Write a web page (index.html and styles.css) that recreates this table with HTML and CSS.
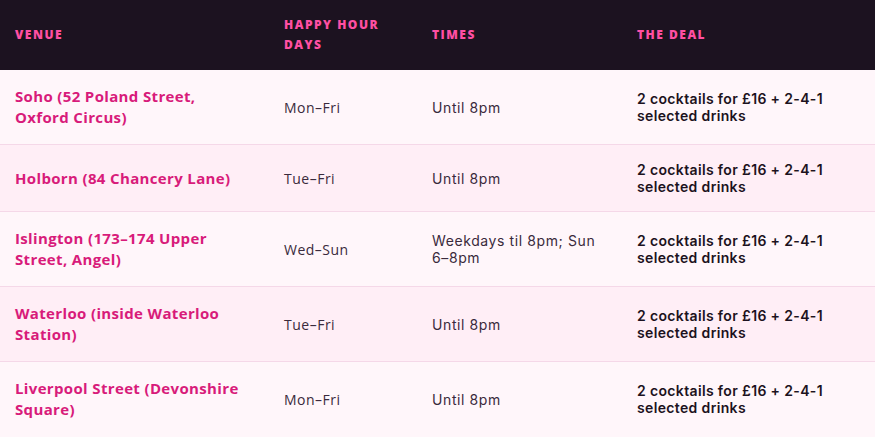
FILE: index.html
```html
<!DOCTYPE html>
<html lang="en">
<head>
<meta charset="utf-8">
<title>Happy Hour</title>
<link rel="stylesheet" href="styles.css">
</head>
<body>
<table class="hh">
  <colgroup>
    <col class="c-venue">
    <col class="c-days">
    <col class="c-times">
    <col class="c-deal">
  </colgroup>
  <thead>
    <tr>
      <th>Venue</th>
      <th>Happy Hour Days</th>
      <th>Times</th>
      <th>The Deal</th>
    </tr>
  </thead>
  <tbody>
    <tr>
      <td class="venue">Soho (52 Poland Street, Oxford Circus)</td>
      <td class="days">Mon–Fri</td>
      <td class="times">Until 8pm</td>
      <td class="deal">2 cocktails for £16 + 2-4-1 selected drinks</td>
    </tr>
    <tr>
      <td class="venue">Holborn (84 Chancery Lane)</td>
      <td class="days">Tue–Fri</td>
      <td class="times">Until 8pm</td>
      <td class="deal">2 cocktails for £16 + 2-4-1 selected drinks</td>
    </tr>
    <tr>
      <td class="venue">Islington (173–174 Upper Street, Angel)</td>
      <td class="days">Wed–Sun</td>
      <td class="times">Weekdays til 8pm; Sun 6–8pm</td>
      <td class="deal">2 cocktails for £16 + 2-4-1 selected drinks</td>
    </tr>
    <tr>
      <td class="venue">Waterloo (inside Waterloo Station)</td>
      <td class="days">Tue–Fri</td>
      <td class="times">Until 8pm</td>
      <td class="deal">2 cocktails for £16 + 2-4-1 selected drinks</td>
    </tr>
    <tr>
      <td class="venue">Liverpool Street (Devonshire Square)</td>
      <td class="days">Mon–Fri</td>
      <td class="times">Until 8pm</td>
      <td class="deal">2 cocktails for £16 + 2-4-1 selected drinks</td>
    </tr>
  </tbody>
</table>
</body>
</html>
```

FILE: styles.css
```css
html, body {
  margin: 0;
  padding: 0;
  background: #fff6fa;
}

.hh {
  width: 875px;
  border-collapse: collapse;
  table-layout: fixed;
  font-family: "Open Sans", "Noto Sans", sans-serif;
}

.c-venue { width: 269px; }
.c-days { width: 148px; }
.c-times { width: 205px; }
.c-deal { width: 253px; }

.hh thead tr {
  background: #1c1220;
}

.hh th {
  padding: 15px 15px;
  text-align: left;
  vertical-align: middle;
  font-family: "Open Sans", sans-serif;
  font-weight: 800;
  font-size: 12px;
  line-height: 20px;
  letter-spacing: 1.5px;
  text-transform: uppercase;
  color: #ff4fa3;
}

.hh td {
  padding: 16px 15px;
  vertical-align: middle;
  border-bottom: 1px solid #f5d8e8;
}

.hh tbody tr:nth-child(odd) { background: #fff6fa; }
.hh tbody tr:nth-child(even) { background: #ffeef6; }
.hh tbody tr:last-child td { border-bottom: none; }

.hh td.venue {
  padding-right: 24px;
  font-family: "Open Sans", sans-serif;
  font-weight: 700;
  font-size: 15px;
  line-height: 21px;
  letter-spacing: 0.35px;
  color: #d81b7a;
}

.days {
  font-family: "Open Sans", sans-serif;
  font-size: 14px;
  line-height: 21px;
  letter-spacing: 0.5px;
  color: #3a2a3c;
}

.times {
  font-family: "Inter", sans-serif;
  font-size: 14px;
  line-height: 17px;
  letter-spacing: 0.6px;
  color: #3a2a3c;
}

.deal {
  font-family: "Inter", sans-serif;
  font-weight: 600;
  font-size: 14px;
  line-height: 17px;
  letter-spacing: 0.35px;
  color: #1c1220;
}
```
